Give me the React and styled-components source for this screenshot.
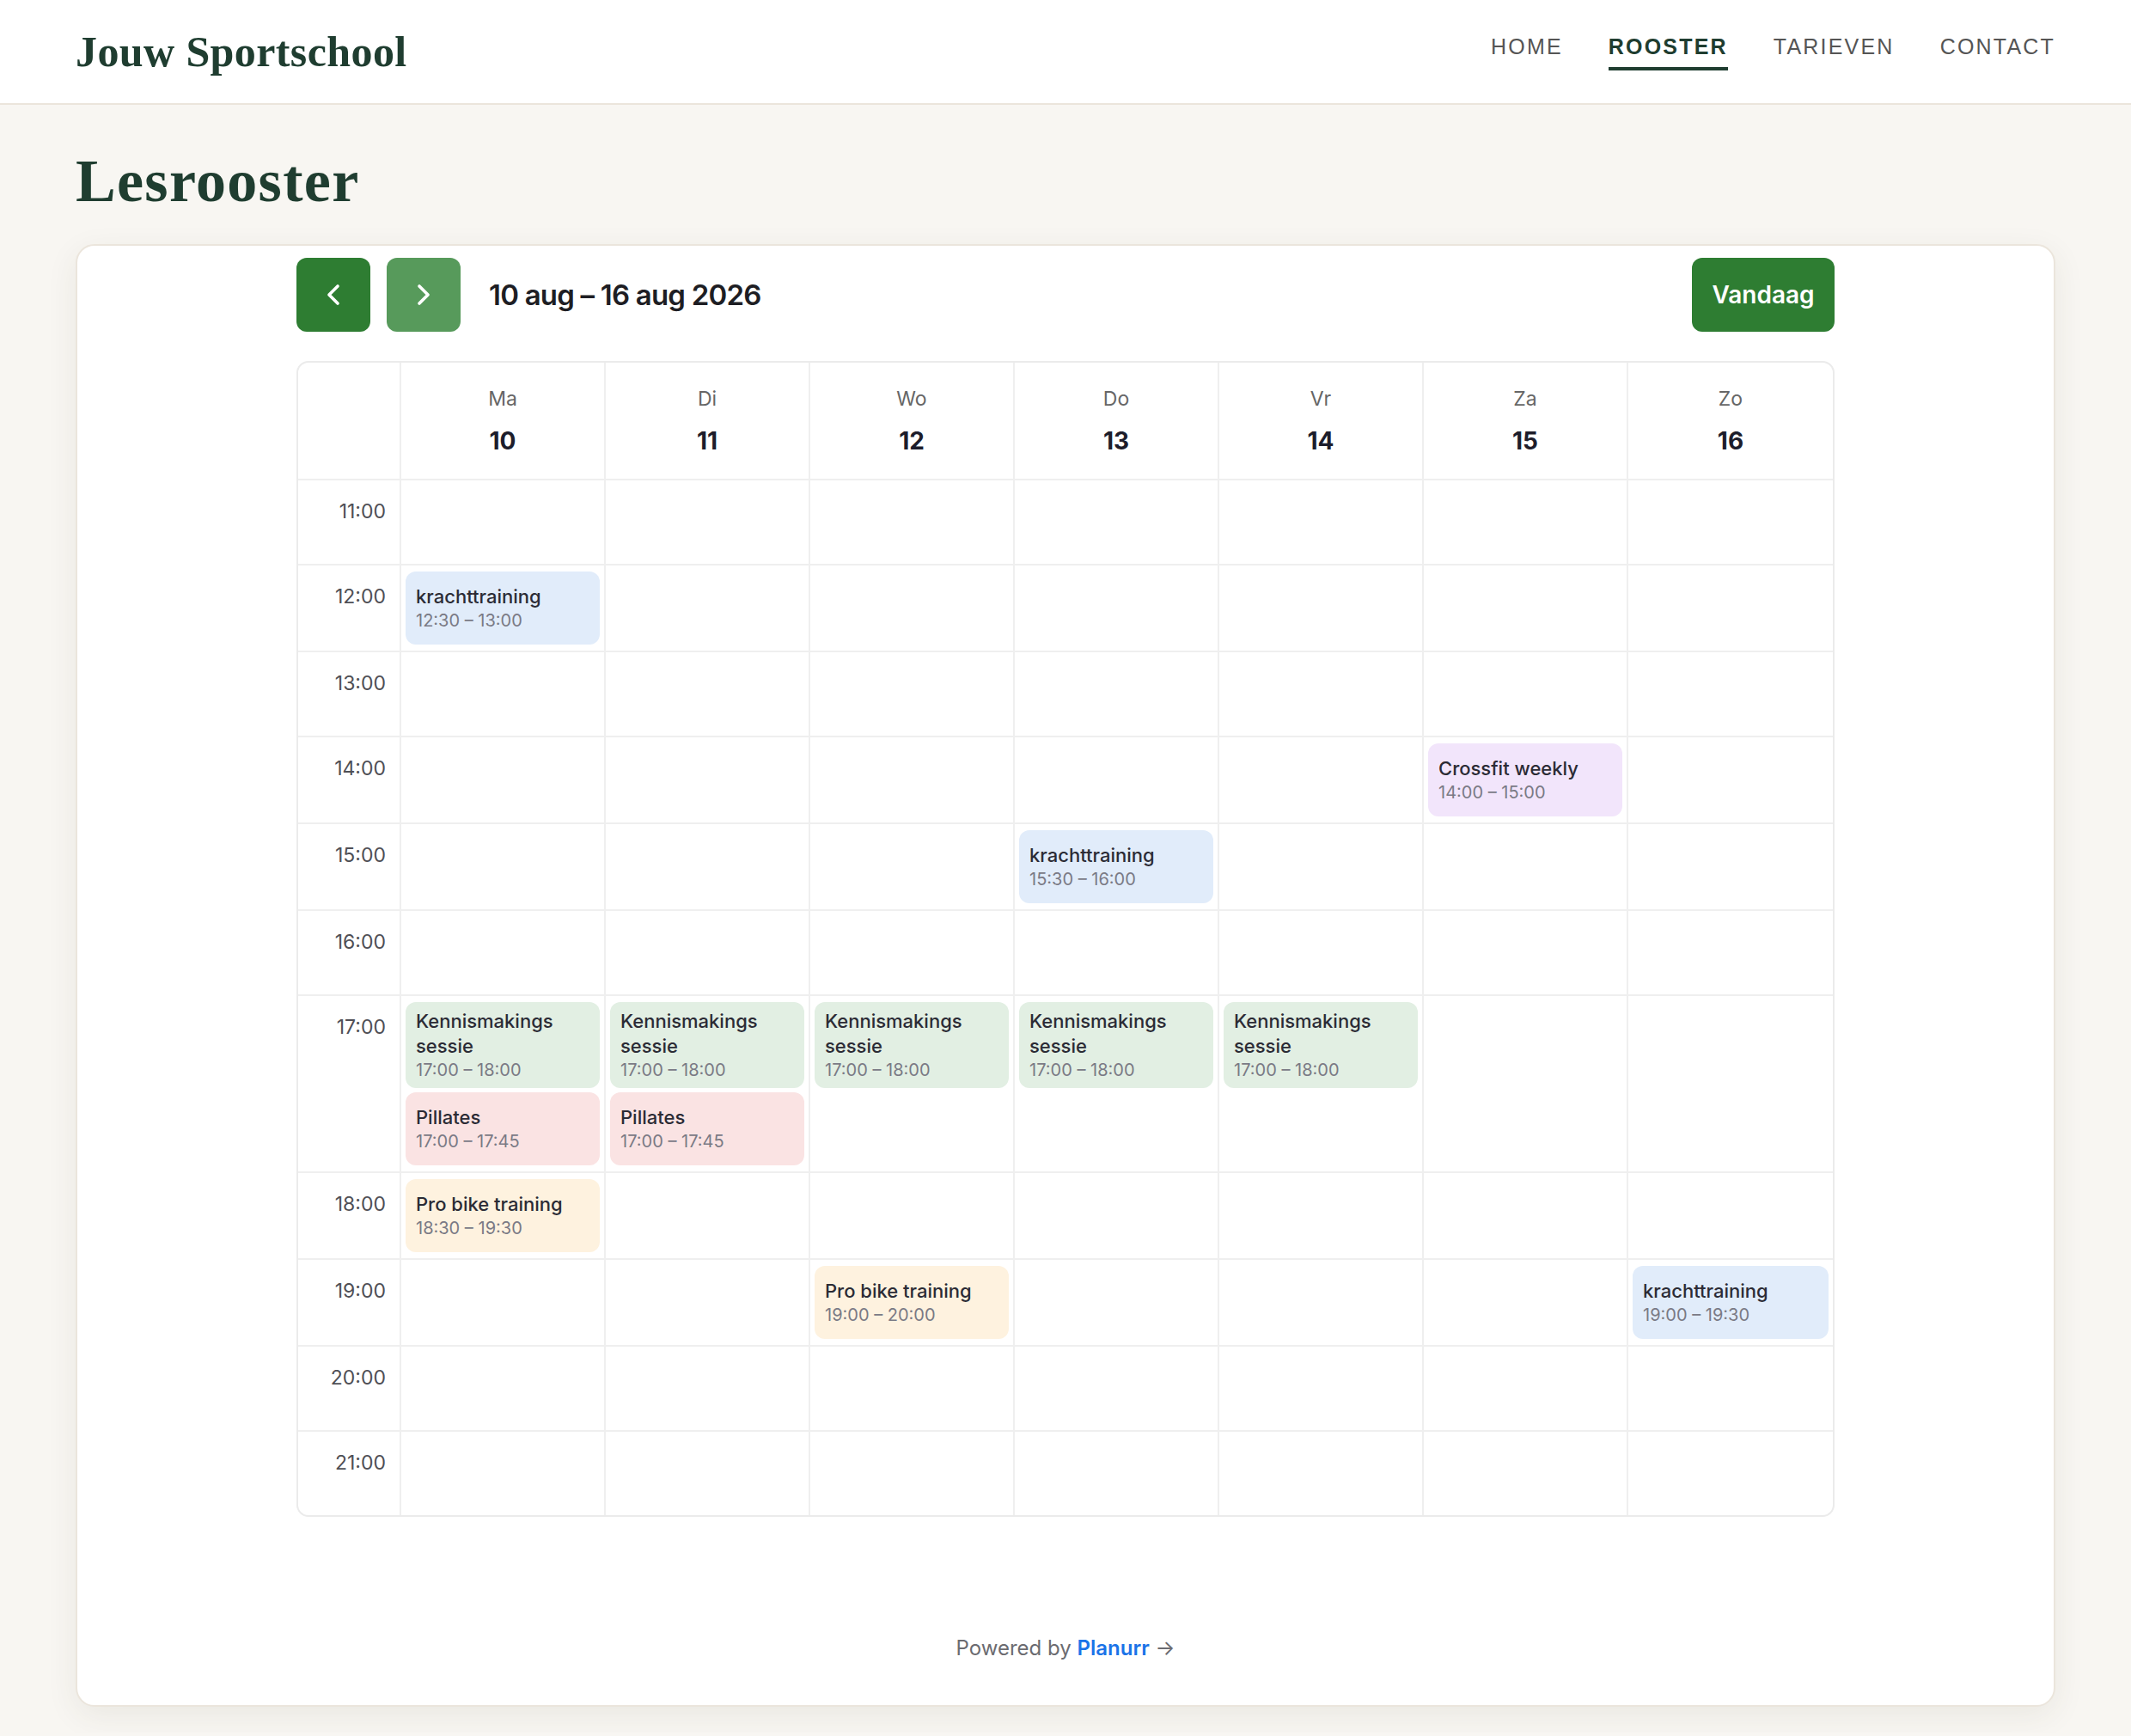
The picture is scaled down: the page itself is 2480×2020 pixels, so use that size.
import React from 'react';
import styled, { createGlobalStyle } from 'styled-components';
import { ChevronLeft, ChevronRight } from 'lucide-react';

const GlobalStyle = createGlobalStyle`
  body {
    margin: 0;
    background: #f8f6f2;
    font-family: Inter, "Noto Sans", sans-serif;
  }
`;

const Header = styled.header`
  display: flex;
  justify-content: space-between;
  align-items: center;
  height: 120px;
  padding: 0 88px;
  background: #fff;
  border-bottom: 2px solid #ebe5dc;
`;

const Logo = styled.div`
  font-family: "Liberation Serif", serif;
  font-weight: 700;
  font-size: 50px;
  letter-spacing: 0.4px;
  color: #1f3d30;
`;

const Nav = styled.nav`
  display: flex;
  gap: 53px;
`;

const NavLink = styled.a`
  font-family: "Liberation Sans", Arial, sans-serif;
  font-size: 25px;
  line-height: 30px;
  letter-spacing: 2.2px;
  text-transform: uppercase;
  padding-bottom: 9px;
  border-bottom: 4px solid ${p => (p.$active ? '#1f3d30' : 'transparent')};
  color: ${p => (p.$active ? '#1f3d30' : '#555')};
  font-weight: ${p => (p.$active ? 700 : 400)};
  text-decoration: none;
`;

const Main = styled.main`
  padding: 0 88px 30px;
`;

const Title = styled.h1`
  font-family: "Liberation Serif", serif;
  font-weight: 700;
  font-size: 70px;
  line-height: 77px;
  letter-spacing: 1.3px;
  color: #1f3d30;
  margin: 50px 0 35px;
`;

const Card = styled.section`
  background: #fff;
  border: 2px solid #ebe5dc;
  border-radius: 22px;
  box-shadow: 0 10px 36px rgba(70, 60, 40, 0.08);
  padding: 14px 0 50px;
`;

const Inner = styled.div`
  width: 1790px;
  margin: 0 auto;
`;

const Toolbar = styled.div`
  display: flex;
  align-items: center;
  height: 86px;
`;

const NavButton = styled.button`
  display: flex;
  align-items: center;
  justify-content: center;
  width: 86px;
  height: 86px;
  border: none;
  border-radius: 12px;
  color: #fff;
  background: ${p => (p.$muted ? '#579a5b' : '#2e7d32')};
  margin-right: ${p => (p.$last ? '33px' : '19px')};
  padding: 0;
`;

const Range = styled.div`
  flex: 1;
  font-size: 33px;
  font-weight: 600;
  color: #1e1e24;
  letter-spacing: -0.8px;
`;

const TodayButton = styled.button`
  width: 166px;
  height: 86px;
  border: none;
  border-radius: 12px;
  background: #2e7d32;
  color: #fff;
  font-family: Inter, sans-serif;
  font-size: 28px;
  font-weight: 600;
`;

const Grid = styled.div`
  display: grid;
  grid-template-columns: 120px repeat(7, 1fr);
  margin-top: 34px;
  border: 2px solid #ebebeb;
  border-radius: 14px;
  overflow: hidden;
`;

const Cell = styled.div`
  border-right: ${p => (p.$lastCol ? 'none' : '2px solid #efefef')};
  border-bottom: ${p => (p.$lastRow ? 'none' : '2px solid #efefef')};
  min-height: ${p => (p.$lastRow ? 97 : 99)}px;
  padding: 7px 5px 7px;
  box-sizing: border-box;
  display: flex;
  flex-direction: column;
  gap: 5px;
`;

const DayHead = styled(Cell)`
  height: 137px;
  padding: 0;
  align-items: center;
  justify-content: center;
  gap: 18px;
`;

const DayName = styled.span`
  font-size: 23px;
  line-height: 28px;
  color: #666;
`;

const DayNum = styled.span`
  font-size: 28px;
  line-height: 34px;
  font-weight: 700;
  color: #1d1d2b;
`;

const TimeCell = styled(Cell)`
  padding: 22px 16px 0 0;
  align-items: flex-end;
  font-size: 23px;
  line-height: 28px;
  color: #4f4f55;
`;

const palette = {
  blue: '#e1ecfa',
  green: '#e2efe3',
  red: '#fae3e3',
  orange: '#fef2df',
  purple: '#f2e5fb',
};

const Event = styled.div`
  min-height: 85px;
  box-sizing: border-box;
  padding: 8px 12px;
  border-radius: 12px;
  background: ${p => palette[p.$tone]};
  display: flex;
  flex-direction: column;
  justify-content: center;
`;

const EventTitle = styled.div`
  font-size: 22px;
  line-height: 29px;
  font-weight: 500;
  color: #2b2b35;
`;

const EventTime = styled.div`
  font-size: 20px;
  line-height: 26px;
  color: #7a7a85;
`;

const Footer = styled.div`
  margin-top: 137px;
  text-align: center;
  font-size: 24px;
  line-height: 32px;
  color: #6b6b70;
`;

const Brand = styled.a`
  color: #1a73e8;
  font-weight: 600;
  text-decoration: none;
`;

const days = [
  ['Ma', 10], ['Di', 11], ['Wo', 12], ['Do', 13], ['Vr', 14], ['Za', 15], ['Zo', 16],
];

const hours = [11, 12, 13, 14, 15, 16, 17, 18, 19, 20, 21];

const kennis = { title: 'Kennismakings sessie', time: '17:00 – 18:00', tone: 'green' };
const pillates = { title: 'Pillates', time: '17:00 – 17:45', tone: 'red' };

// events keyed by "hour-dayIndex"
const events = {
  '12-0': [{ title: 'krachttraining', time: '12:30 – 13:00', tone: 'blue' }],
  '14-5': [{ title: 'Crossfit weekly', time: '14:00 – 15:00', tone: 'purple' }],
  '15-3': [{ title: 'krachttraining', time: '15:30 – 16:00', tone: 'blue' }],
  '17-0': [kennis, pillates],
  '17-1': [kennis, pillates],
  '17-2': [kennis],
  '17-3': [kennis],
  '17-4': [kennis],
  '18-0': [{ title: 'Pro bike training', time: '18:30 – 19:30', tone: 'orange' }],
  '19-2': [{ title: 'Pro bike training', time: '19:00 – 20:00', tone: 'orange' }],
  '19-6': [{ title: 'krachttraining', time: '19:00 – 19:30', tone: 'blue' }],
};

function App() {
  return (
    <>
      <GlobalStyle />
      <Header>
        <Logo>Jouw Sportschool</Logo>
        <Nav>
          <NavLink href="#">Home</NavLink>
          <NavLink href="#" $active>Rooster</NavLink>
          <NavLink href="#">Tarieven</NavLink>
          <NavLink href="#">Contact</NavLink>
        </Nav>
      </Header>
      <Main>
        <Title>Lesrooster</Title>
        <Card>
          <Inner>
            <Toolbar>
              <NavButton><ChevronLeft size={40} strokeWidth={2.2} /></NavButton>
              <NavButton $muted $last><ChevronRight size={40} strokeWidth={2.2} /></NavButton>
              <Range>10 aug – 16 aug 2026</Range>
              <TodayButton>Vandaag</TodayButton>
            </Toolbar>
            <Grid>
              <DayHead />
              {days.map(([name, num], i) => (
                <DayHead key={name} $lastCol={i === 6}>
                  <DayName>{name}</DayName>
                  <DayNum>{num}</DayNum>
                </DayHead>
              ))}
              {hours.map((h, r) => {
                const lastRow = r === hours.length - 1;
                return (
                  <React.Fragment key={h}>
                    <TimeCell $lastRow={lastRow}>{h}:00</TimeCell>
                    {days.map((d, i) => (
                      <Cell key={i} $lastRow={lastRow} $lastCol={i === 6}>
                        {(events[`${h}-${i}`] || []).map((ev, k) => (
                          <Event key={k} $tone={ev.tone}>
                            <EventTitle>{ev.title}</EventTitle>
                            <EventTime>{ev.time}</EventTime>
                          </Event>
                        ))}
                      </Cell>
                    ))}
                  </React.Fragment>
                );
              })}
            </Grid>
            <Footer>
              Powered by <Brand href="#">Planurr</Brand> →
            </Footer>
          </Inner>
        </Card>
      </Main>
    </>
  );
}

export default App;
